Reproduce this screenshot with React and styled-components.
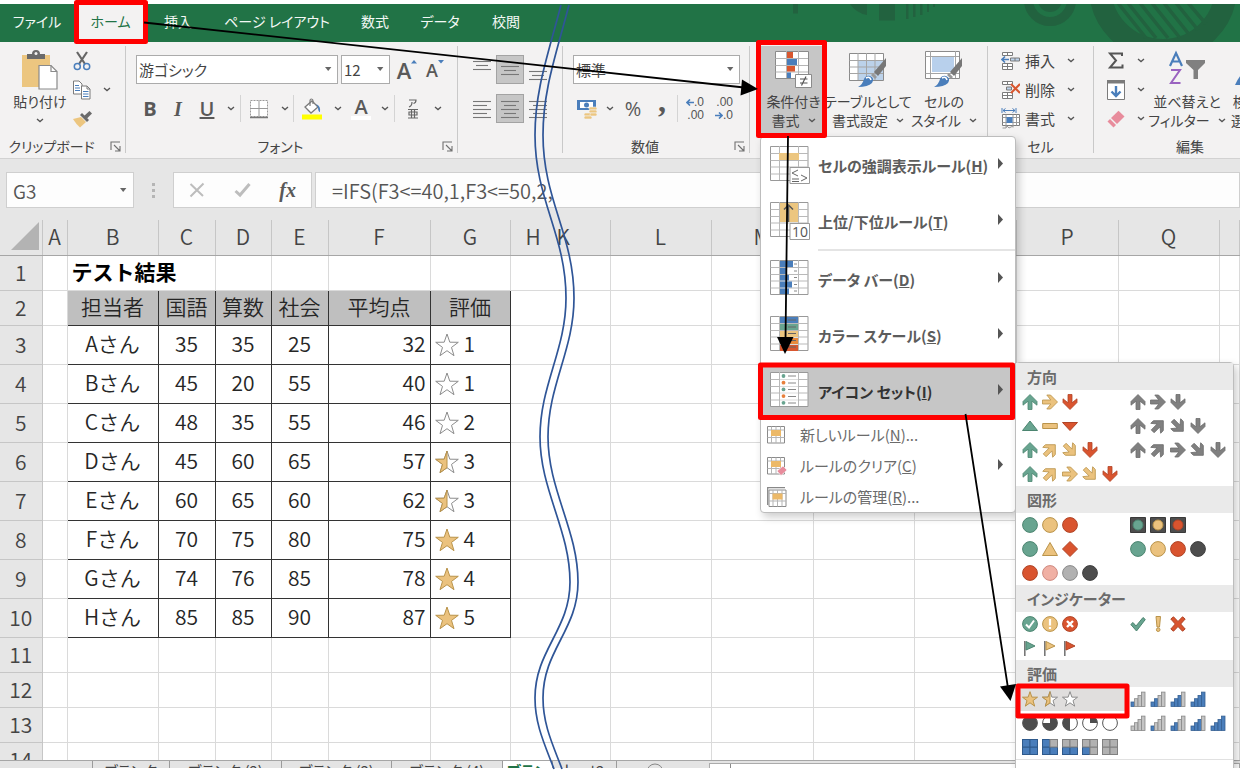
import React from 'react';
import styled, { createGlobalStyle, css } from 'styled-components';

const GlobalStyle = createGlobalStyle`
    * {
        box-sizing: border-box;
    }

    body {
        margin: 0;
        background: #fff;
        font-family: 'Noto Sans CJK JP', 'Noto Sans', sans-serif;
        font-size: 15px;
        color: #444;
    }

    button, select, input {
        font: inherit;
        color: inherit;
    }

    svg {
        display: block;
        flex: none;
    }
`

const Page = styled.div`
    position: relative;
    height: 100vh;
    padding: 4px 0 2px;
    overflow: hidden;
`

const Window = styled.div`
    display: flex;
    flex-direction: column;
    height: 100%;
    overflow: hidden;
`

/* ---------- tabs ---------- */

const TabBar = styled.nav`
    display: flex;
    justify-content: space-between;
    flex: none;
    height: 38px;
    background: #217346;
`

const TabList = styled.div`
    display: grid;
    grid-template-columns: 74px 73px 62px 136px 60px 70px 62px;
`

const Tab = styled.button`
    border: 0;
    padding: 0 0 4px;
    background: ${p => p.$active ? '#f3f2f2' : 'none'};
    color: ${p => p.$active ? '#217346' : '#f4f8f5'};
    font-size: 14px;
    font-feature-settings: 'palt';
    white-space: nowrap;
`

/* ---------- ribbon ---------- */

const RibbonBar = styled.div`
    position: relative;
    z-index: 10;
    display: flex;
    flex: none;
    height: 117px;
    padding-top: 4px;
    background: #f3f2f2;
    border-bottom: 1px solid #d2d2d2;
    font-feature-settings: 'palt';
    white-space: nowrap;
`

const Group = styled.section`
    display: flex;
    flex-direction: column;
    flex: 0 0 ${p => p.$width}px;
    height: 112px;
`

const GroupBody = styled.div`
    display: flex;
    align-items: flex-start;
    flex: 1;
    padding-left: ${p => p.$pad || 0}px;
`

const GroupRows = styled(GroupBody)`
    flex-direction: column;
    gap: 10px;
    padding-top: 9px;
`

const GroupFooter = styled.div`
    display: grid;
    grid-template-columns: ${p => p.$launcher ? '1fr 22px' : '1fr'};
    align-items: center;
    height: 21px;
    padding-bottom: 2px;
    font-size: 14px;
    line-height: 19px;
    text-align: center;
`

const Divider = styled.i`
    flex: none;
    width: 1px;
    height: 107px;
    background: #c9c9c9;
`

const Row = styled.div`
    display: flex;
    align-items: center;
    height: 29px;
`

const ThinLine = styled.i`
    width: 1px;
    height: 27px;
    background: #d4d4d4;
`

const ToolButton = styled.button`
    display: flex;
    align-items: center;
    justify-content: center;
    flex: none;
    width: ${p => p.$width || 28}px;
    height: 29px;
    padding: 0;
    border: 1px solid ${p => p.$active ? '#a3a3a3' : 'transparent'};
    background: ${p => p.$active ? '#c6c6c6' : 'none'};
`

const LauncherButton = styled.button`
    padding: 0 0 0 7px;
    border: 0;
    background: none;
`

const Letter = styled.span`
    padding-bottom: ${p => p.$lift || 0}px;
    font-family: ${p => p.$serif ? "'Liberation Serif', serif" : "'Open Sans', sans-serif"};
    font-size: ${p => p.$size || 20}px;
    font-weight: ${p => p.$weight || 700};
    font-style: ${p => p.$italic ? 'italic' : 'normal'};
    text-decoration: ${p => p.$underline ? 'underline' : 'none'};
    line-height: 24px;
    color: #595959;
`

/* letter over a bar in the picked text colour */
const ColorLetter = styled(Letter)`
    width: 20px;
    border-bottom: 4px solid #fff;
    line-height: 18px;
`

const Combo = styled.label`
    display: grid;
    align-items: center;
    width: ${p => p.$width}px;
    height: 29px;
    margin-right: 3px;
    background: #fff;
    border: 1px solid #ababab;

    > * {
        grid-area: 1 / 1;
    }

    > svg {
        justify-self: end;
        margin-right: 5px;
        pointer-events: none;
    }
`

const ComboSelect = styled.select`
    appearance: none;
    width: 100%;
    height: 27px;
    padding: 0 2px;
    border: 0;
    background: none;
    font-feature-settings: 'palt';
`

const BigButton = styled.button`
    display: flex;
    flex-direction: column;
    align-items: center;
    flex: none;
    width: ${p => p.$width}px;
    height: 90px;
    padding: 4px 0 0;
    border: 0;
    background: ${p => p.$active ? '#c6c6c6' : 'none'};
    font-size: 14px;
    line-height: 19px;
    font-feature-settings: 'palt';
    white-space: nowrap;
`

const BigIcon = styled.span`
    height: 42px;
`

const Line = styled.span`
    display: flex;
    align-items: center;
    gap: 8px;
    height: 19px;
`

const SmallStack = styled.div`
    display: flex;
    flex-direction: column;
`

const SmallButton = styled.button`
    display: flex;
    align-items: center;
    gap: 5px;
    height: 29px;
    padding: 0;
    border: 0;
    background: none;
    line-height: 24px;
    font-feature-settings: 'palt';

    > svg:last-child:not(:first-child) {
        margin-left: 7px;
    }
`

const Anchor = styled.div`
    position: relative;
`

/* ---------- drop-down menus ---------- */

const Menu = styled.div`
    position: absolute;
    top: 100%;
    left: -1px;
    width: 256px;
    background: #fff;
    border: 1px solid #bdbdbd;
    border-radius: 4px;
    box-shadow: 3px 4px 8px rgba(0, 0, 0, 0.2);
`

const MenuItem = styled.button`
    display: grid;
    align-items: center;
    width: 100%;
    padding: 0 11px 0 9px;
    border: 0;
    background: ${p => p.$active ? '#c6c6c6' : 'none'};
    color: ${p => p.$active ? '#333' : '#5c5c5c'};
    text-align: left;
    font-feature-settings: 'palt';
    white-space: nowrap;

    ${p => p.$small ? css`
        grid-template-columns: 31px 1fr 7px;
        height: 31px;
        padding-left: 6px;
        gap: 0 2px;
        color: #6b6b6b;
    ` : css`
        grid-template-columns: 48px 1fr 7px;
        height: 56px;
        font-weight: 700;
    `}
`

const MenuRule = styled.hr`
    height: 2px;
    margin: 0 0 0 57px;
    border: 0;
    background: #e4e4e4;
`

const SubMenu = styled.div`
    position: absolute;
    top: -1px;
    left: 100%;
    width: 219px;
    height: 440px;
    background: #fff;
    border: 1px solid #bdbdbd;
    border-radius: 4px;
    box-shadow: 3px 4px 8px rgba(0, 0, 0, 0.2);
`

const SetTitle = styled.h3`
    height: 27px;
    margin: 0;
    padding-left: 11px;
    background: #eaeaea;
    color: #6b6b6b;
    font-size: 15px;
    font-weight: 700;
    line-height: 27px;
`

const SetGrid = styled.div`
    display: grid;
    grid-template-columns: 108px 1fr;
    grid-auto-rows: 24px;
    padding-left: 3px;
`

const SetButton = styled.button`
    display: flex;
    align-items: center;
    gap: 4px;
    padding: 0 3px;
    border: 0;
    background: ${p => p.$active ? '#e0dedd' : 'none'};
`

const SetEnd = styled.hr`
    margin: 0;
    border: 0;
    border-top: 1px solid #e1e1e1;
`

/* ---------- formula bar ---------- */

const FormulaBar = styled.div`
    display: flex;
    flex: none;
    height: 61px;
    padding: 13px 0 12px 6px;
    background: #e6e6e6;
    color: #555;
`

const FormulaBox = styled.div`
    display: flex;
    align-items: center;
    justify-content: space-between;
    flex: ${p => p.$width ? `0 0 ${p.$width}px` : '1 1 0'};
    min-width: 0;
    margin-right: ${p => p.$gap || 0}px;
    padding: ${p => p.$pad || '0 6px'};
    background: #fdfdfd;
    border: 1px solid #cfcfcf;
`

const FormulaInput = styled.input`
    flex: 1;
    width: 100%;
    min-width: 0;
    height: 33px;
    padding: 0;
    border: 0;
    outline: 0;
    background: none;
    font-size: ${p => p.$size}px;
    font-weight: 350;
`

const Dots = styled.div`
    display: flex;
    flex-direction: column;
    align-items: center;
    justify-content: center;
    gap: 3px;
    width: 39px;

    > i {
        width: 3px;
        height: 3px;
        background: #b5b5b5;
    }
`

/* ---------- sheet ---------- */

const SheetArea = styled.main`
    flex: 1;
    min-height: 0;
    overflow: hidden;
`

const Sheet = styled.table`
    width: 100%;
    table-layout: fixed;
    border-collapse: collapse;
    background: #fff;
    color: #262626;
    font-size: 21px;
    font-weight: 350;
    line-height: 30px;
`

const SheetRow = styled.tr`
    height: ${p => p.$height}px;
`

const HeadCell = styled.th`
    padding: 0 0 2px;
    background: #e6e6e6;
    border-right: 1px solid ${p => p.$open ? '#e6e6e6' : '#c6c6c6'};
    border-bottom: 1px solid ${p => p.scope === 'col' ? '#a6a6a6' : '#c6c6c6'};
    color: #444;
    font-weight: 350;
    text-align: ${p => p.$flush ? 'left' : 'center'};

    > svg {
        margin: 0 0 0 10px;
    }
`

const Cell = styled.td`
    padding: 0 4px 4px;
    border: 1px solid #dadada;
    border-left-color: ${p => p.$joined ? 'transparent' : '#dadada'};
    border-right-color: ${p => p.$open ? 'transparent' : '#dadada'};
    text-align: ${p => p.$align || 'center'};
    white-space: nowrap;

    ${p => p.$title && css`
        color: #000;
        font-weight: 700;
    `}

    ${p => p.$boxed && css`
        border: 1px solid #333;
        background: ${p.$boxed === 'head' ? '#bfbfbf' : '#fff'};
    `}
`

const Rating = styled.div`
    display: flex;
    align-items: center;
    gap: 5px;

    > svg {
        margin-top: 4px;
    }
`

const SheetTabs = styled.footer`
    display: flex;
    flex: none;
    height: 8px;
    padding-left: 92px;
    overflow: hidden;
    background: #e4e4e4;
    border-top: 1px solid #a6a6a6;
`

const SheetTab = styled.button`
    flex: 0 0 ${p => p.$width}px;
    align-self: flex-start;
    height: 19px;
    padding: 0;
    border: 0;
    border-left: 1px solid #9b9b9b;
    background: ${p => p.$active ? '#fff' : 'none'};
    color: ${p => p.$active ? '#217346' : '#444'};
    font-feature-settings: 'palt';
    font-weight: ${p => p.$active ? 700 : 400};
    line-height: 19px;
`

const ScrollTrack = styled.div`
    flex: 1;
    margin-top: 2px;
    background: #fff;
    border: 1px solid #ababab;
    border-bottom: 0;

    > i {
        display: block;
        width: 21px;
        height: 8px;
        border-right: 1px solid #8a8a8a;
    }
`

const Annotations = styled.svg`
    position: absolute;
    z-index: 20;
    top: 0;
    left: 0;
    pointer-events: none;
`

/* ---------- icons ---------- */

const GRAY = '#7b7b7b';
const BLUE = '#4a7ebb';

const Chevron = () => (
    <svg width="8" height="5" viewBox="0 0 8 5" fill="none" stroke="#555" strokeWidth="1.3">
        <path d="M1 1 4 3.6 7 1" />
    </svg>
)

const Caret = () => (
    <svg width="8" height="5" viewBox="0 0 8 5"><path d="M1 0H7.4L4.2 4Z" fill="#666" /></svg>
)

const MenuArrow = () => (
    <svg width="7" height="18" viewBox="0 0 7 18"><path d="M1 2V13L6 7.500Z" fill="#555" /></svg>
)

const Launcher = () => (
    <svg width="11" height="11" viewBox="0 0 11 11" fill="none" stroke="#707070" strokeWidth="1.1">
        <path d="M1 9V1H10M4 4 9.5 9.5M10 5V10H5" />
    </svg>
)

const PasteIcon = () => (
    <svg width="38" height="41" viewBox="0 0 38 41">
        <path d="M1 5H29V37H1Z" fill="#ecc680" />
        <path d="M6 9V4H11Q11 0 15 0T19 4H24V9Z" fill="#6a6a6a" />
        <circle cx="15" cy="3.5" r="1.5" fill="#f3f2f2" />
        <path d="M18 15.500H30L36 21.500V39H18Z" fill="#fff" stroke="#8a8a8a" strokeWidth="1.2" />
        <path d="M30 15.500V21.500H36" fill="none" stroke="#8a8a8a" strokeWidth="1.2" />
    </svg>
)

const CutIcon = () => (
    <svg width="18" height="20" viewBox="0 0 18 20" fill="none">
        <path d="M4 1 12 13M14 1 6 13" stroke="#666" strokeWidth="2.2" />
        <circle cx="4.300" cy="15.500" r="3" stroke={BLUE} strokeWidth="1.500" />
        <circle cx="13.700" cy="15.500" r="3" stroke={BLUE} strokeWidth="1.500" />
    </svg>
)

const CopyIcon = () => (
    <svg width="18" height="20" viewBox="0 0 18 20" fill="#fff" stroke={GRAY}>
        <path d="M.5 1H6L9 4V14H.5Z" />
        <path d="M2 5.500H6M2 8H7M2 10.500H7" stroke={BLUE} />
        <path d="M8.500 6H14L17 9V19H8.500Z" />
        <path d="M14 6V9H17" fill="none" />
        <path d="M10 11.500H15.500M10 14H15.500M10 16.500H15.500" stroke={BLUE} />
    </svg>
)

const BrushIcon = () => (
    <svg width="20" height="18" viewBox="0 0 20 18">
        <path d="M0 9 8 7 13 12 7 17.500Q3 14 0 9Z" fill="#ecc680" />
        <path d="M7 5 9 3 16 10 14 12Z" fill="#6b6b6b" />
        <path d="M11 6 16.500 1 19 3.500 14 8.500Z" fill="#6b6b6b" />
    </svg>
)

const BordersIcon = () => (
    <svg width="20" height="20" viewBox="0 0 20 20" fill="#fff" stroke="#999">
        <path d="M1.500 1.500H18.500V17.500H1.500Z" strokeDasharray="2 1" />
        <path d="M10 1.500V17.500M1.500 9.500H18.500" />
        <path d="M1 18.500H19" stroke="#777" strokeWidth="1.500" />
    </svg>
)

const FillIcon = () => (
    <svg width="22" height="22" viewBox="0 0 22 22">
        <path d="M4 9 11 3 17 9 10 15Z" fill="#fff" stroke={GRAY} strokeWidth="1.300" />
        <path d="M9 8V3Q9 1 10.500 1T12 3V6" fill="none" stroke={GRAY} strokeWidth="1.200" />
        <path d="M15 6Q20 8 19 14Q17 14 17 9Z" fill={BLUE} />
        <path d="M1 16.500H21V21.500H1Z" fill="#ffff00" />
    </svg>
)

const RubyIcon = () => (
    <svg width="12" height="20" viewBox="0 0 12 20" fill="none" stroke="#666" strokeWidth="1.200">
        <path d="M2 1H9Q9 4 6.500 4.500M5 3Q5 7 2 8" />
        <path d="M1 10.500H11M1 19H11M4.500 10.500V19M7.500 10.500V19M2 13H10V16H2Z" />
    </svg>
)

const GrowMark = ({ down }) => (
    <svg width="6" height="22" viewBox="0 0 6 22">
        <path d={down ? 'M0 1H6L3 4.500Z' : 'M0 4.500H6L3 1Z'} fill={BLUE} />
    </svg>
)

// each entry is [y, half width] of one text line
const LINES = {
    top: [[4, 9], [8, 6], [12, 9]],
    middle: [[9, 9], [13, 6], [17, 9]],
    bottom: [[14, 9], [18, 6], [22, 9]],
    left: [[5, 9], [9, 7], [13, 9], [17, 7], [21, 9]],
    center: [[5, 9], [9, 6], [13, 9], [17, 6], [21, 9]],
    right: [[5, 9], [9, 7], [13, 9], [17, 7], [21, 9]],
}

const AlignIcon = ({ kind }) => (
    <svg width="20" height="26" viewBox="0 0 20 26" stroke="#777" strokeWidth="1.100">
        {LINES[kind].map(([y, w]) => {
            const from = kind === 'left' ? 1 : kind === 'right' ? 19 - 2 * w : 10 - w;
            return <path key={y} d={`M${from} ${y}.500h${2 * w}`} />;
        })}
    </svg>
)

const MoneyIcon = () => (
    <svg width="22" height="20" viewBox="0 0 22 20">
        <path d="M1 1H20V11H1Z" fill={BLUE} />
        <path d="M4 3H17V9H4Z" fill="#fff" />
        <circle cx="10.500" cy="6" r="2.500" fill={BLUE} />
        <g fill="#ecc680" stroke="#f3f2f2" strokeWidth=".6">
            <rect x="13" y="8" width="8" height="3" rx="1.500" />
            <rect x="13" y="11" width="8" height="3" rx="1.500" />
            <rect x="8" y="14" width="8" height="3" rx="1.500" />
            <rect x="8" y="17" width="8" height="3" rx="1.500" />
            <rect x="14" y="14" width="7" height="3" rx="1.500" />
        </g>
    </svg>
)

const Decimal = styled.span`
    display: flex;
    flex-direction: column;
    align-items: flex-end;
    font-family: 'Liberation Sans', sans-serif;
    font-size: 12px;
    line-height: 13px;
    color: #555;

    > span {
        display: flex;
        align-items: center;
    }
`

const BlueArrow = ({ right }) => (
    <svg width="8" height="7" viewBox="0 0 8 7" fill="none" stroke={BLUE} strokeWidth="1.600">
        <path d={right ? 'M0 3.500H7M4 .5 7 3.500 4 6.500' : 'M8 3.500H1M4 .5 1 3.500 4 6.500'} />
    </svg>
)

const CondIcon = () => (
    <svg width="38" height="39" viewBox="0 0 38 39">
        <path d="M.5 1.500H33.500V28.500H.5Z" fill="#fff" stroke="#8b8b8b" />
        <path d="M11.500 1V28M23.500 1V28M.5 8.500H33M.5 15.500H33M.5 22H33" stroke="#b5b5b5" />
        <path d="M12 2H18V8H12ZM12 16H20V21.500H12Z" fill="#d9572f" />
        <path d="M12 9H22V15H12ZM12 22.500H16V28H12Z" fill={BLUE} />
        <path d="M20.500 24.500H36.500V37.500H20.500Z" fill="#fff" stroke="#8b8b8b" />
        <path d="M25 29H32.500M25 33H32.500M31 26.500 26.500 35.500" stroke="#555" strokeWidth="1.200" />
    </svg>
)

const Brush = () => (
    <>
        <path d="M38 8V16L30 26 26 22Z" fill="#777" />
        <path d="M25 23 29 27 27 29 23 25Z" fill="#999" />
        <path d="M10 37Q15 34 16 29Q18 25 22 26Q27 28 24 33Q20 37 10 37Z" fill={BLUE} />
        <path d="M18 28Q22 26 23 30" fill="none" stroke="#fff" strokeWidth="1.500" />
    </>
)

const TableIcon = () => (
    <svg width="40" height="38" viewBox="0 0 40 38">
        <path d="M1.500 3.500H35.500V30.500H1.500Z" fill="#fff" stroke="#8b8b8b" />
        <path d="M10 10H35V30H10Z" fill="#bcd2ea" />
        <path d="M10 3V30M18.500 3V30M27 3V30M1.500 10.500H35M1.500 17H35M1.500 23.500H35" stroke="#a5a5a5" />
        <Brush />
    </svg>
)

const StyleIcon = () => (
    <svg width="40" height="38" viewBox="0 0 40 38">
        <path d="M1.500 1.500H35.500V28.500H1.500Z" fill="#fff" stroke="#8b8b8b" />
        <path d="M8 7H30V22H8Z" fill="#b8d0ec" />
        <path d="M6.500 1V28M31.500 1V28M1.500 6.500H35M1.500 23.500H35" stroke="#a5a5a5" />
        <Brush />
    </svg>
)

const InsertIcon = () => (
    <svg width="19" height="20" viewBox="0 0 19 20" fill="#fff" stroke={GRAY}>
        <path d="M1.500 1.500H11.500V4.500H1.500ZM6.500 1.500V4.500M1.500 12.500H11.500V18.500H1.500ZM6.500 12.500V18.500M1.500 15.500H11.500" />
        <path d="M9.500 7H18.500V10H9.500ZM14 7V10" fill="#bcd2ea" />
        <path d="M8 8.500H1M4 5.500 1 8.500 4 11.500" fill="none" stroke={BLUE} strokeWidth="1.600" />
    </svg>
)

const DeleteIcon = () => (
    <svg width="19" height="20" viewBox="0 0 19 20" fill="#fff" stroke={GRAY}>
        <path d="M1.500 1.500H11.500V4.500H1.500ZM6.500 1.500V4.500M1.500 12.500H11.500V18.500H1.500ZM6.500 12.500V18.500M1.500 15.500H11.500" />
        <path d="M5.500 7H10.500V10H5.500Z" fill="#bcd2ea" />
        <path d="M10 4 19 13M19 4 10 13" stroke="#d9572f" strokeWidth="2" />
    </svg>
)

const FormatIcon = () => (
    <svg width="19" height="21" viewBox="0 0 19 21" fill="#fff" stroke={GRAY}>
        <path d="M1 0V5M15 0V5M2 2.500H14M4.500.5 2 2.500 4.500 4.500M11.500.5 14 2.500 11.500 4.500" fill="none" stroke={BLUE} />
        <path d="M1.500 6.500H18.500V17.500H1.500Z" />
        <path d="M5 6.500V19.500M12 6.500V19.500M15.500 6.500V17.500M1.500 9.500H18.500M1.500 14.500H18.500M1.500 20H5L6 18 8 20 12 18" fill="none" stroke="#999" />
        <path d="M5.500 9H11.500V15H5.500Z" fill={BLUE} stroke="none" />
    </svg>
)

const SumIcon = () => (
    <svg width="18" height="17" viewBox="0 0 18 17" fill="none" stroke="#555" strokeWidth="2">
        <path d="M15 4V1.500H3L9 8.500 3 15.500H15.500V12.500" />
    </svg>
)

const DownBoxIcon = () => (
    <svg width="18" height="20" viewBox="0 0 18 20">
        <path d="M.5.5H17.500V19.500H.5Z" fill="#fff" stroke={GRAY} />
        <path d="M0 0H18V3.500H0Z" fill={GRAY} />
        <path d="M9 6V16M4.500 11.500 9 16 13.500 11.500" fill="none" stroke={BLUE} strokeWidth="2.400" />
    </svg>
)

const EraserIcon = () => (
    <svg width="18" height="18" viewBox="0 0 18 18">
        <path d="M4 8 11.500.8 17.500 6.500 10 14Z" fill="#e88c9c" />
        <path d="M3 9 9 15 6.500 17.500.5 11.500Z" fill="#e88c9c" />
    </svg>
)

const SortIcon = () => (
    <svg width="38" height="38" viewBox="0 0 38 38" fill="none">
        <path d="M2 16 8 3 14 16M4 11.500H12" stroke={BLUE} strokeWidth="2.200" />
        <path d="M3 20H12L3 33H12.500" stroke="#9a63c0" strokeWidth="2" />
        <path d="M18 10H37V13L30 20V29H25.500V20L18 13Z" fill="#808080" />
    </svg>
)

const FindIcon = () => (
    <svg width="38" height="38" viewBox="0 0 38 38">
        <path d="M1 35Q4 28 8 24L15 30V35Z" fill={BLUE} />
        <circle cx="22" cy="14" r="10" fill="#fff" stroke={BLUE} strokeWidth="3" />
    </svg>
)

const CancelIcon = () => (
    <svg width="16" height="16" viewBox="0 0 16 16" stroke="#bdbdbd" strokeWidth="2"><path d="M1.500 2 14 14M14.500 1.500 1.500 14.500" /></svg>
)

const EnterIcon = () => (
    <svg width="17" height="16" viewBox="0 0 17 16" fill="none" stroke="#bdbdbd" strokeWidth="3"><path d="M1.500 9 6 13 15.500 2" /></svg>
)

/* table picture shared by the large menu icons */
const GridBase = ({ children }) => (
    <svg width="41" height="40" viewBox="0 0 41 40">
        <path d="M.5 1.500H38V35.500H.5Z" fill="#fff" stroke="#999" />
        <path d="M9.500 1V35M28.500 1V35M.5 8.500H38M.5 15.500H38M.5 22H38M.5 29H38" stroke="#b9b9b9" />
        {children}
    </svg>
)

const HighlightIcon = () => (
    <GridBase>
        <path d="M9 8H29V15H9Z" fill="#ecc680" />
        <path d="M20 22.500H39.500V38.500H20Z" fill="#fff" stroke="#999" />
        <path d="M28 25 22 28 28 31M22 34H29M22 36.500H29M31 30 37 33 31 36" fill="none" stroke="#666" />
    </GridBase>
)

const Ten = styled.text`
    font-family: 'Open Sans', sans-serif;
    font-size: 14px;
    font-weight: 400;
    fill: #555;
`

const TopIcon = () => (
    <GridBase>
        <path d="M10 2H28V21H10Z" fill="#ecc680" />
        <path d="M18.500 21V4M14 8.500 18.500 4 23 8.500" fill="none" stroke="#555" strokeWidth="1.500" />
        <path d="M20 22.500H39.500V38.500H20Z" fill="#fff" stroke="#999" />
        <Ten x="22" y="36">10</Ten>
    </GridBase>
)

const DataBarIcon = () => (
    <GridBase>
        <path d="M10 2H23V8H10ZM10 9H16V15H10ZM10 16H19V21.500H10ZM10 22.500H22V28.500H10ZM10 29.500H19V35H10Z" fill={BLUE} />
        <path d="M24 5H27M24 12H27M24 18.500H27M24 25.500H27M24 32H27" stroke="#888" />
    </GridBase>
)

const ScaleIcon = () => (
    <GridBase>
        {[BLUE, '#68a490', '#ecc680', '#e88a3c', '#d9572f'].map((c, i) => (
            <rect key={c} x="10" y={2 + i * 7} width="18" height="6" fill={c} />
        ))}
        <path d="M18 5H26M18 12H26M18 18.500H26M18 25.500H26M18 32H26" stroke="#666" />
    </GridBase>
)

const IconSetIcon = () => (
    <GridBase>
        <path d="M10 2H28V35H10Z" fill="#fff" />
        <path d="M10 8.500H28M10 15.500H28M10 22H28M10 29H28" stroke="#dcdcdc" />
        {['#68a490', '#e8803c', '#68a490', '#e8803c', '#68a490'].map((c, i) => (
            <circle key={i} cx="13.500" cy={5 + i * 6.700} r="1.900" fill={c} />
        ))}
        <path d="M18 5H26M18 12H26M18 18.500H26M18 25.500H26M18 32H26" stroke="#888" />
    </GridBase>
)

const RuleIcon = ({ erase, stacked }) => (
    <svg width="20" height="20" viewBox="0 0 20 20">
        {stacked && <path d="M.7 18V.7H18" fill="none" stroke="#888" strokeWidth="1.300" />}
        <g transform={stacked ? 'translate(1.500 1.500)' : undefined}>
            <path d="M.5 1.500H17.500V18H.5Z" fill="#fff" stroke="#8a8a8a" />
            <path d="M4.500 1.500V18M13.500 1.500V18M9 1.500V18M.5 5H17.500M.5 12.500H17.500" stroke="#b5b5b5" />
            <path d="M4 5H14V11H4Z" fill="#ecb968" />
        </g>
        {erase && <path d="M10 15 16 10 20 14 14 19.500Z" fill="#e88c9c" stroke="#fff" strokeWidth=".6" />}
    </svg>
)

const FILLS = {
    green: ['#68a490', '#4c8570'],
    gold: ['#ebc27e', '#b9934a'],
    red: ['#d9542f', '#b04426'],
    gray: ['#808080', '#6c6c6c'],
    dark: ['#4d4d4d', '#3f3f3f'],
    pink: ['#f0b0a4', '#cf8a80'],
    silver: ['#b1b1b1', '#8c8c8c'],
}

const STAR = 'M12 1 14.800 9.200 23.300 9.300 16.500 14.400 19 22.700 12 17.700 5 22.700 7.500 14.400.7 9.300 9.200 9.200Z';
const HALF_STAR = 'M12 1V17.700L5 22.700 7.500 14.400.7 9.300 9.200 9.200Z';

const Star = ({ fill, size = 16 }) => (
    <svg width={size} height={size} viewBox="0 0 24 24" strokeWidth={size > 20 ? 1 : 1.500} strokeLinejoin="round">
        <path d={STAR} fill={fill === 'full' ? '#ebc27e' : '#fff'} stroke={fill === 'full' ? '#b9934a' : '#8c8c8c'} />
        {fill === 'half' && <path d={HALF_STAR} fill="#ebc27e" stroke="#b9934a" />}
    </svg>
)

const ANGLES = { up: 0, ne: 45, right: 90, se: 135, down: 180 };

// kind:value pairs, e.g. up:green or bars:2
function Mark({ code }) {
    const [kind, value] = code.split(':');
    const [fill, stroke] = FILLS[value] || [];
    const n = Number(value);

    if (kind === 'star') return <Star fill={value} />;

    let shape;
    if (kind in ANGLES) {
        shape = <path transform={`rotate(${ANGLES[kind]} 8 8)`} strokeWidth=".8" d="M8 .5 15 7.500V11.200L10 7.200V15.500H6V7.200L1 11.200V7.500Z" />;
    } else if (kind === 'rise') {
        shape = <path d="M8 3 15.500 12.500H.5Z" />;
    } else if (kind === 'flat') {
        shape = <path d="M.7 5.500H15.300V10.500H.7Z" />;
    } else if (kind === 'fall') {
        shape = <path d="M.5 4.500H15.500L8 12.500Z" />;
    } else if (kind === 'dot') {
        shape = <circle cx="8" cy="8" r="7.400" />;
    } else if (kind === 'light') {
        shape = <><path d="M.5.500H15.500V15.500H.5Z" fill="#4d4d4d" stroke="#3a3a3a" /><circle cx="8" cy="8" r="5" /></>;
    } else if (kind === 'tri') {
        shape = <path d="M8 1.500 15.500 14.500H.5Z" />;
    } else if (kind === 'diamond') {
        shape = <path d="M8 .5 15.500 8 8 15.500.5 8Z" />;
    } else if (kind === 'ok') {
        shape = <><circle cx="8" cy="8" r="7.400" /><path d="M4 8.500 7 11.500 12 4.500" fill="none" stroke="#fff" strokeWidth="2" /></>;
    } else if (kind === 'warn') {
        shape = <><circle cx="8" cy="8" r="7.400" /><path d="M8 3V9.500M8 11V13" stroke="#fff" strokeWidth="2.200" /></>;
    } else if (kind === 'bad') {
        shape = <><circle cx="8" cy="8" r="7.400" /><path d="M5 5 11 11M11 5 5 11" stroke="#fff" strokeWidth="2.400" /></>;
    } else if (kind === 'check') {
        shape = <path d="M.8 8.500 3 6.500 6 10 13 1.500 15.300 3.500 6.500 15Z" />;
    } else if (kind === 'bang') {
        shape = <><path d="M6 .5H10.500L9.500 11H7Z" /><circle cx="8.200" cy="13.700" r="1.800" /></>;
    } else if (kind === 'cross') {
        shape = <path d="M.8 3 3.500.8 8 5.500 12.500.8 15.200 3 10.700 8 15.200 13 12.500 15.200 8 10.500 3.500 15.200.8 13 5.300 8Z" />;
    } else if (kind === 'flag') {
        shape = <><path d="M2.800 1V16" stroke="#777" strokeWidth="1.600" /><path d="M4 1.500 13 6 4 10Z" /></>;
    } else if (kind === 'bars') {
        shape = [0, 1, 2, 3].map(i => (
            <rect key={i} x={1 + i * 3.500} y={11 - i * 3.300} width="3.500" height={4.500 + i * 3.300}
                fill={i < n ? BLUE : '#c4c4c4'} stroke={i < n ? '#366092' : '#888'} strokeWidth=".8" />
        ));
    } else if (kind === 'pie') {
        // value counts the dark quarters
        const parts = ['', 'M8 8V.6A7.400 7.400 0 0 1 15.400 8Z', 'M8 .6A7.400 7.400 0 0 0 8 15.400Z', 'M8 8V.6A7.400 7.400 0 1 1 .6 8Z'];
        shape = <><circle cx="8" cy="8" r="7.400" fill={n === 4 ? '#4d4d4d' : '#fff'} stroke="#555" /><path d={parts[n] || ''} fill="#4d4d4d" stroke="none" /></>;
    } else {
        // quarters fill bottom left, bottom right, top left, top right
        shape = [[.5, 8], [8, 8], [.5, .5], [8, .5]].map(([x, y], i) => (
            <rect key={i} x={x} y={y} width="7.500" height="7.500"
                fill={i < n ? BLUE : '#b1b1b1'} stroke={i < n ? '#2f5a8c' : '#808080'} />
        ));
    }

    return <svg width="16" height="16" viewBox="0 0 16 16" fill={fill} stroke={stroke}>{shape}</svg>;
}

const ICON_SETS = [
    { title: '方向', sets: [
        'up:green right:gold down:red', 'up:gray right:gray down:gray',
        'rise:green flat:gold fall:red', 'up:gray ne:gray se:gray down:gray',
        'up:green ne:gold se:gold down:red', 'up:gray ne:gray right:gray se:gray down:gray',
        'up:green ne:gold right:gold se:gold down:red', '',
    ] },
    { title: '図形', sets: [
        'dot:green dot:gold dot:red', 'light:green light:gold light:red',
        'dot:green tri:gold diamond:red', 'dot:green dot:gold dot:red dot:dark',
        'dot:red dot:pink dot:silver dot:dark', '',
    ] },
    { title: 'インジケーター', sets: [
        'ok:green warn:gold bad:red', 'check:green bang:gold cross:red',
        'flag:green flag:gold flag:red', '',
    ] },
    { title: '評価', sets: [
        'star:full star:half star:none', 'bars:1 bars:2 bars:3 bars:4',
        'pie:4 pie:3 pie:2 pie:1 pie:0', 'bars:0 bars:1 bars:2 bars:3 bars:4',
        'box:4 box:3 box:2 box:1 box:0', '',
    ] },
];

const MENU_ITEMS = [
    { icon: <HighlightIcon />, text: 'セルの強調表示ルール', hotkey: 'H' },
    { icon: <TopIcon />, text: '上位/下位ルール', hotkey: 'T', rule: true },
    { icon: <DataBarIcon />, text: 'データ バー', hotkey: 'D' },
    { icon: <ScaleIcon />, text: 'カラー スケール', hotkey: 'S' },
];

/* ---------- parts ---------- */

function IconSetMenu() {
    return (
        <SubMenu>
            {ICON_SETS.map(group => (
                <div key={group.title}>
                    <SetTitle>{group.title}</SetTitle>
                    <SetGrid>
                        {group.sets.map((set, i) => set
                            ? (
                                <SetButton key={i} aria-label={`${group.title} ${i + 1}`} $active={set.startsWith('star')}>
                                    {set.split(' ').map((code, j) => <Mark key={j} code={code} />)}
                                </SetButton>
                            )
                            : <span key={i} />)}
                    </SetGrid>
                </div>
            ))}
            <SetEnd />
        </SubMenu>
    )
}

function ConditionalMenu() {
    return (
        <Menu>
            {MENU_ITEMS.map(item => (
                <React.Fragment key={item.hotkey}>
                    <MenuItem>
                        {item.icon}
                        <span>{item.text}(<u>{item.hotkey}</u>)</span>
                        <MenuArrow />
                    </MenuItem>
                    {item.rule && <MenuRule />}
                </React.Fragment>
            ))}
            <Anchor>
                <MenuItem $active>
                    <IconSetIcon />
                    <span>アイコン セット(<u>I</u>)</span>
                    <MenuArrow />
                </MenuItem>
                <IconSetMenu />
            </Anchor>
            <MenuItem $small><RuleIcon /><span>新しいルール(<u>N</u>)...</span></MenuItem>
            <MenuItem $small><RuleIcon erase /><span>ルールのクリア(<u>C</u>)</span><MenuArrow /></MenuItem>
            <MenuItem $small><RuleIcon stacked /><span>ルールの管理(<u>R</u>)...</span></MenuItem>
        </Menu>
    )
}

function Footer({ label, launcher }) {
    return (
        <GroupFooter $launcher={launcher}>
            <span>{label}</span>
            {launcher && <LauncherButton aria-label="詳細"><Launcher /></LauncherButton>}
        </GroupFooter>
    )
}

function Picker({ label, value, width }) {
    return (
        <Combo $width={width}>
            <ComboSelect aria-label={label} defaultValue={value}>
                <option>{value}</option>
            </ComboSelect>
            <Caret />
        </Combo>
    )
}

function Ribbon() {
    return (
        <RibbonBar>
            <Group $width={125}>
                <GroupBody $pad={7}>
                    <BigButton $width={66}>
                        <BigIcon><PasteIcon /></BigIcon>
                        <Line>貼り付け</Line>
                        <Line><Chevron /></Line>
                    </BigButton>
                    <SmallStack>
                        <SmallButton aria-label="切り取り"><CutIcon /></SmallButton>
                        <SmallButton aria-label="コピー"><CopyIcon /><Chevron /></SmallButton>
                        <SmallButton aria-label="書式のコピー"><BrushIcon /></SmallButton>
                    </SmallStack>
                </GroupBody>
                <Footer label="クリップボード" launcher />
            </Group>
            <Divider />
            <Group $width={331}>
                <GroupRows $pad={10}>
                    <Row>
                        <Picker label="フォント名" value="游ゴシック" width={202} />
                        <Picker label="サイズ" value="12" width={49} />
                        <ToolButton><Letter $size={22} $weight={600}>A</Letter><GrowMark /></ToolButton>
                        <ToolButton><Letter $size={18} $weight={600}>A</Letter><GrowMark down /></ToolButton>
                    </Row>
                    <Row>
                        <ToolButton><Letter>B</Letter></ToolButton>
                        <ToolButton><Letter $serif $italic>I</Letter></ToolButton>
                        <ToolButton $width={30}><Letter $underline $weight={600}>U</Letter></ToolButton>
                        <ToolButton $width={18} aria-label="下線"><Chevron /></ToolButton>
                        <ThinLine />
                        <ToolButton $width={36} aria-label="罫線"><BordersIcon /></ToolButton>
                        <ToolButton $width={16} aria-label="罫線の種類"><Chevron /></ToolButton>
                        <ThinLine />
                        <ToolButton $width={36} aria-label="塗りつぶし"><FillIcon /></ToolButton>
                        <ToolButton $width={16} aria-label="塗りつぶしの色"><Chevron /></ToolButton>
                        <ToolButton $width={30}><ColorLetter $weight={600}>A</ColorLetter></ToolButton>
                        <ToolButton $width={18} aria-label="文字の色"><Chevron /></ToolButton>
                        <ThinLine />
                        <ToolButton $width={36} aria-label="ふりがな"><RubyIcon /></ToolButton>
                        <ToolButton $width={14} aria-label="ふりがなの設定"><Chevron /></ToolButton>
                    </Row>
                </GroupRows>
                <Footer label="フォント" launcher />
            </Group>
            <Divider />
            <Group $width={104}>
                <GroupRows $pad={10}>
                    <Row>
                        <ToolButton aria-label="上揃え"><AlignIcon kind="top" /></ToolButton>
                        <ToolButton aria-label="上下中央揃え" $active><AlignIcon kind="middle" /></ToolButton>
                        <ToolButton aria-label="下揃え"><AlignIcon kind="bottom" /></ToolButton>
                    </Row>
                    <Row>
                        <ToolButton aria-label="左揃え"><AlignIcon kind="left" /></ToolButton>
                        <ToolButton aria-label="中央揃え" $active><AlignIcon kind="center" /></ToolButton>
                        <ToolButton aria-label="右揃え"><AlignIcon kind="right" /></ToolButton>
                    </Row>
                </GroupRows>
            </Group>
            <Divider />
            <Group $width={186}>
                <GroupRows $pad={10}>
                    <Row><Picker label="表示形式" value="標準" width={167} /></Row>
                    <Row>
                        <ToolButton aria-label="通貨"><MoneyIcon /></ToolButton>
                        <ToolButton $width={18} aria-label="通貨の種類"><Chevron /></ToolButton>
                        <ToolButton $width={28}><Letter $weight={400}>%</Letter></ToolButton>
                        <ToolButton $width={30}><Letter $serif $size={32} $lift={16}>,</Letter></ToolButton>
                        <ThinLine />
                        <ToolButton $width={34}><Decimal><span><BlueArrow />.0</span><span>.00</span></Decimal></ToolButton>
                        <ToolButton $width={24}><Decimal><span>.00</span><span><BlueArrow right />.0</span></Decimal></ToolButton>
                    </Row>
                </GroupRows>
                <Footer label="数値" launcher />
            </Group>
            <Divider />
            <Group $width={237}>
                <GroupBody $pad={11}>
                    <Anchor>
                        <BigButton $width={65} $active>
                            <BigIcon><CondIcon /></BigIcon>
                            <Line>条件付き</Line>
                            <Line>書式<Chevron /></Line>
                        </BigButton>
                        <ConditionalMenu />
                    </Anchor>
                    <BigButton $width={84}>
                        <BigIcon><TableIcon /></BigIcon>
                        <Line>テーブルとして</Line>
                        <Line>書式設定<Chevron /></Line>
                    </BigButton>
                    <BigButton $width={68}>
                        <BigIcon><StyleIcon /></BigIcon>
                        <Line>セルの</Line>
                        <Line>スタイル<Chevron /></Line>
                    </BigButton>
                </GroupBody>
            </Group>
            <Divider />
            <Group $width={105}>
                <GroupBody $pad={13}>
                    <SmallStack>
                        <SmallButton><InsertIcon />挿入<Chevron /></SmallButton>
                        <SmallButton><DeleteIcon />削除<Chevron /></SmallButton>
                        <SmallButton><FormatIcon />書式<Chevron /></SmallButton>
                    </SmallStack>
                </GroupBody>
                <Footer label="セル" />
            </Group>
            <Divider />
            <Group $width={192}>
                <GroupBody $pad={13}>
                    <SmallStack>
                        <SmallButton aria-label="合計"><SumIcon /><Chevron /></SmallButton>
                        <SmallButton aria-label="フィル"><DownBoxIcon /><Chevron /></SmallButton>
                        <SmallButton aria-label="クリア"><EraserIcon /><Chevron /></SmallButton>
                    </SmallStack>
                    <BigButton $width={84}>
                        <BigIcon><SortIcon /></BigIcon>
                        <Line>並べ替えと</Line>
                        <Line>フィルター<Chevron /></Line>
                    </BigButton>
                    <BigButton $width={48}>
                        <BigIcon><FindIcon /></BigIcon>
                        <Line>検索と</Line>
                        <Line>選択<Chevron /></Line>
                    </BigButton>
                </GroupBody>
                <Footer label="編集" />
            </Group>
        </RibbonBar>
    )
}

/* bar decoration at the right of the tabs */
const TabPattern = () => (
    <svg width="460" height="38" viewBox="0 0 460 38" fill="#22623f">
        <path d="M13 0H18V9.500H13ZM70 0H87V11Q76 9 70 0ZM99 0H115V16.500H99Z" />
        <path d="M126 0h2.500v15h-2.500ZM133 0h2.500v13h-2.500ZM140 0h2.500v11h-2.500ZM147 0h2v8h-2ZM153 0h2v3h-2Z" />
        <g fill="none" stroke="#22623f">
            <circle cx="270" cy="-4" r="21.500" strokeWidth="9" />
            <circle cx="383" cy="-17" r="63" strokeWidth="22" />
            <path d="M334 -6 366 34M344 -6 376 34M356 -6 388 34M368 -6 400 34M380 -6 408 29M392 -6 418 26M404 -6 426 20" strokeWidth="3.500" />
        </g>
        <circle cx="270" cy="-4" r="12" />
    </svg>
)

const COLUMNS = [
    ['A', 25], ['B', 91], ['C', 57], ['D', 56], ['E', 57], ['F', 102], ['G', 80], ['H', 46], ['K', 54],
    ['L', 101], ['M', 102], ['N', 101], ['O', 102], ['P', 102], ['Q', 101], ['R', null],
];

const HEADERS = ['担当者', '国語', '算数', '社会', '平均点', '評価'];

const RESULTS = [
    ['Aさん', 35, 35, 25, 32, 1],
    ['Bさん', 45, 20, 55, 40, 1],
    ['Cさん', 48, 35, 55, 46, 2],
    ['Dさん', 45, 60, 65, 57, 3],
    ['Eさん', 60, 65, 60, 62, 3],
    ['Fさん', 70, 75, 80, 75, 4],
    ['Gさん', 74, 76, 85, 78, 4],
    ['Hさん', 85, 85, 90, 87, 5],
];

function starFor(score) {
    if (score >= 4) return 'full';
    return score === 3 ? 'half' : 'none';
}

/* empty cells from the given column to the right edge */
function Blanks({ from }) {
    return COLUMNS.slice(from).map(([name]) => (
        <Cell key={name} $open={name === 'H'} $joined={name === 'K'} />
    ));
}

function Worksheet() {
    return (
        <Sheet>
            <colgroup>
                <col width="42" />
                {COLUMNS.map(([name, width]) => <col key={name} width={width || undefined} />)}
            </colgroup>
            <thead>
                <SheetRow $height={35}>
                    <HeadCell scope="col">
                        <svg width="30" height="30" viewBox="0 0 30 30"><path d="M29 1V29H1Z" fill="#b3b3b3" /></svg>
                    </HeadCell>
                    {COLUMNS.map(([name, width]) => (
                        <HeadCell key={name} scope="col" $open={name === 'H'} $flush={name === 'K'}>{width && name}</HeadCell>
                    ))}
                </SheetRow>
            </thead>
            <tbody>
                <SheetRow $height={35}>
                    <HeadCell scope="row">1</HeadCell>
                    <Cell />
                    <Cell colSpan={2} $title $align="left">テスト結果</Cell>
                    <Blanks from={3} />
                </SheetRow>
                <SheetRow $height={35}>
                    <HeadCell scope="row">2</HeadCell>
                    <Cell />
                    {HEADERS.map(text => <Cell key={text} $boxed="head">{text}</Cell>)}
                    <Blanks from={7} />
                </SheetRow>
                {RESULTS.map(([name, a, b, c, average, score], i) => (
                    <SheetRow key={name} $height={39}>
                        <HeadCell scope="row">{i + 3}</HeadCell>
                        <Cell />
                        <Cell $boxed>{name}</Cell>
                        <Cell $boxed>{a}</Cell>
                        <Cell $boxed>{b}</Cell>
                        <Cell $boxed>{c}</Cell>
                        <Cell $boxed $align="right">{average}</Cell>
                        <Cell $boxed><Rating><Star size={24} fill={starFor(score)} />{score}</Rating></Cell>
                        <Blanks from={7} />
                    </SheetRow>
                ))}
                {[11, 12, 13, 14].map(n => (
                    <SheetRow key={n} $height={35}>
                        <HeadCell scope="row">{n}</HeadCell>
                        <Blanks from={0} />
                    </SheetRow>
                ))}
            </tbody>
        </Sheet>
    )
}

const WAVE = 'C548 55 535 90 535 135C535 200 566 235 566 298C566 350 540 385 540 437C540 490 570 530 570 582C570 630 535 650 535 698C535 725 545 745 554 769';

export default function App() {
    return (
        <Page>
            <GlobalStyle />
            <Window>
                <TabBar>
                    <TabList>
                        <Tab>ファイル</Tab>
                        <Tab $active>ホーム</Tab>
                        <Tab>挿入</Tab>
                        <Tab>ページ レイアウト</Tab>
                        <Tab>数式</Tab>
                        <Tab>データ</Tab>
                        <Tab>校閲</Tab>
                    </TabList>
                    <TabPattern />
                </TabBar>
                <Ribbon />
                <FormulaBar>
                    <FormulaBox $width={128}>
                        <FormulaInput $size={19} aria-label="名前ボックス" defaultValue="G3" />
                        <Caret />
                    </FormulaBox>
                    <Dots><i /><i /><i /></Dots>
                    <FormulaBox $width={139} $pad="0 15px" $gap={3}>
                        <CancelIcon />
                        <EnterIcon />
                        <Letter $serif $italic>fx</Letter>
                    </FormulaBox>
                    <FormulaBox $pad="0 16px">
                        <FormulaInput $size={20} aria-label="数式" defaultValue="=IFS(F3<=40,1,F3<=50,2," />
                    </FormulaBox>
                </FormulaBar>
                <SheetArea><Worksheet /></SheetArea>
                <SheetTabs>
                    <SheetTab $width={77}>ブランク</SheetTab>
                    <SheetTab $width={112}>ブランク (2)</SheetTab>
                    <SheetTab $width={110}>ブランク (3)</SheetTab>
                    <SheetTab $width={111}>ブランク (4)</SheetTab>
                    <SheetTab $width={50} $active>ブラン</SheetTab>
                    <SheetTab $width={64}>heet2</SheetTab>
                    <SheetTab $width={93} aria-label="新しいシート">
                        <svg width="80" height="20" viewBox="0 0 80 20" fill="none" stroke="#888"><circle cx="38" cy="11" r="8" /></svg>
                    </SheetTab>
                    <ScrollTrack><i /></ScrollTrack>
                </SheetTabs>
            </Window>

            <Annotations width="1240" height="770" viewBox="0 0 1240 770" fill="none">
                <g stroke="#2f5597" strokeWidth="1.700">
                    <path d={`M561 5${WAVE}`} />
                    <path d={`M561 5${WAVE}`} transform="translate(8 0)" />
                </g>
                <g stroke="#f00" strokeWidth="5" strokeLinejoin="round">
                    <rect x="76.500" y="2.500" width="69" height="39" />
                    <rect x="758.500" y="42.500" width="66" height="93" />
                    <rect x="760.500" y="365" width="252" height="52.500" />
                    <rect x="1018" y="686" width="109" height="30" />
                </g>
                <g stroke="#000" strokeWidth="1.800">
                    <path d="M144 22.500 744 87.500M788 136 785.500 340M965.500 414 1008 688" />
                </g>
                <g fill="#000">
                    <path d="M758 89 740.500 95.500 742 79.500Z" />
                    <path d="M785 354 777 337H793.500Z" />
                    <path d="M1010.500 701 1000 686.500 1016 684Z" />
                </g>
            </Annotations>
        </Page>
    )
}
